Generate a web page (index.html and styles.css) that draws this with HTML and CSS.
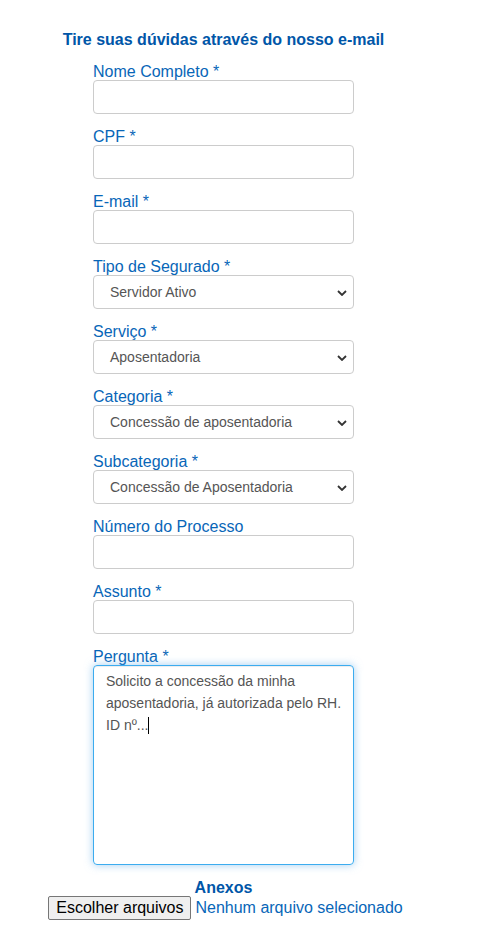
FILE: index.html
```html
<!DOCTYPE html>
<html lang="pt-BR">
<head>
<meta charset="utf-8">
<title>Contato</title>
<link rel="stylesheet" href="styles.css">
</head>
<body>
<div class="page">
  <h2 class="title">Tire suas dúvidas através do nosso e-mail</h2>
  <form class="form">
    <div class="group">
      <label class="label">Nome Completo *</label>
      <input class="control" type="text">
    </div>
    <div class="group">
      <label class="label">CPF *</label>
      <input class="control" type="text">
    </div>
    <div class="group">
      <label class="label">E-mail *</label>
      <input class="control" type="text">
    </div>
    <div class="group">
      <label class="label">Tipo de Segurado *</label>
      <div class="select"><span>Servidor Ativo</span><svg class="chev" viewBox="0 0 10 6" width="10" height="6"><path d="M1 1 L5 5 L9 1" fill="none" stroke="#333" stroke-width="1.8"/></svg></div>
    </div>
    <div class="group">
      <label class="label">Serviço *</label>
      <div class="select"><span>Aposentadoria</span><svg class="chev" viewBox="0 0 10 6" width="10" height="6"><path d="M1 1 L5 5 L9 1" fill="none" stroke="#333" stroke-width="1.8"/></svg></div>
    </div>
    <div class="group">
      <label class="label">Categoria *</label>
      <div class="select"><span>Concessão de aposentadoria</span><svg class="chev" viewBox="0 0 10 6" width="10" height="6"><path d="M1 1 L5 5 L9 1" fill="none" stroke="#333" stroke-width="1.8"/></svg></div>
    </div>
    <div class="group">
      <label class="label">Subcategoria *</label>
      <div class="select"><span>Concessão de Aposentadoria</span><svg class="chev" viewBox="0 0 10 6" width="10" height="6"><path d="M1 1 L5 5 L9 1" fill="none" stroke="#333" stroke-width="1.8"/></svg></div>
    </div>
    <div class="group">
      <label class="label">Número do Processo</label>
      <input class="control" type="text">
    </div>
    <div class="group">
      <label class="label">Assunto *</label>
      <input class="control" type="text">
    </div>
    <div class="group">
      <label class="label">Pergunta *</label>
      <div class="textarea">Solicito a concessão da minha aposentadoria, já autorizada pelo RH. ID nº...<span class="caret"></span></div>
    </div>
  </form>
  <div class="attach">
    <div class="attach-title">Anexos</div>
    <div class="file-row"><button class="file-btn" type="button">Escolher arquivos</button><span class="file-name">Nenhum arquivo selecionado</span></div>
  </div>
</div>
</body>
</html>
```
FILE: styles.css
```css
html, body {
  margin: 0;
  padding: 0;
  background: #fff;
}
body {
  font-family: "Liberation Sans", Arial, sans-serif;
}
.page {
  width: 431px;
  margin-left: 8px;
  padding-top: 30px;
  text-align: center;
}
.title {
  margin: 0 0 13px 0;
  font-size: 16px;
  font-weight: bold;
  color: #0056a8;
  line-height: 20px;
}
.form {
  width: 261px;
  margin: 0 auto;
  text-align: left;
  display: flex;
  flex-direction: column;
  gap: 14px;
}
.group {
  display: flex;
  flex-direction: column;
}
.label {
  font-size: 16px;
  line-height: 17px;
  color: #0866b8;
}
.control {
  box-sizing: border-box;
  width: 261px;
  height: 34px;
  margin: 0;
  border: 1px solid #ccc;
  border-radius: 4px;
  background: #fff;
  font: 14px "Liberation Sans", Arial, sans-serif;
  outline: none;
}
.select {
  box-sizing: border-box;
  width: 261px;
  height: 34px;
  border: 1px solid #ccc;
  border-radius: 4px;
  background: #fff;
  display: flex;
  align-items: center;
  justify-content: space-between;
  padding: 0 6px 0 16px;
  font-size: 14px;
  color: #555;
}
.chev {
  display: block;
  margin-top: 1px;
}
.textarea {
  box-sizing: border-box;
  width: 261px;
  height: 200px;
  border: 1px solid #3cacef;
  border-radius: 4px;
  box-shadow: inset 0 1px 1px rgba(0,0,0,.075), 0 0 8px rgba(102,175,233,.6);
  padding: 4px 4px 6px 12px;
  font-size: 14px;
  line-height: 22px;
  color: #555;
}
.caret {
  display: inline-block;
  width: 1px;
  height: 17px;
  background: #000;
  vertical-align: -4px;
}
.attach {
  margin-top: 14px;
}
.attach-title {
  font-size: 16px;
  font-weight: bold;
  color: #0056a8;
  line-height: 17px;
}
.file-row {
  display: flex;
  justify-content: center;
  align-items: center;
  gap: 4px;
  margin-left: 4px;
}
.file-btn {
  font: 16px "Liberation Sans", Arial, sans-serif;
  color: #000;
  background: #efefef;
  border: 1px solid #767676;
  border-radius: 2px;
  padding: 1px 7px;
  height: 24px;
  line-height: 18px;
}
.file-name {
  font-size: 16px;
  color: #0866b8;
}
```
